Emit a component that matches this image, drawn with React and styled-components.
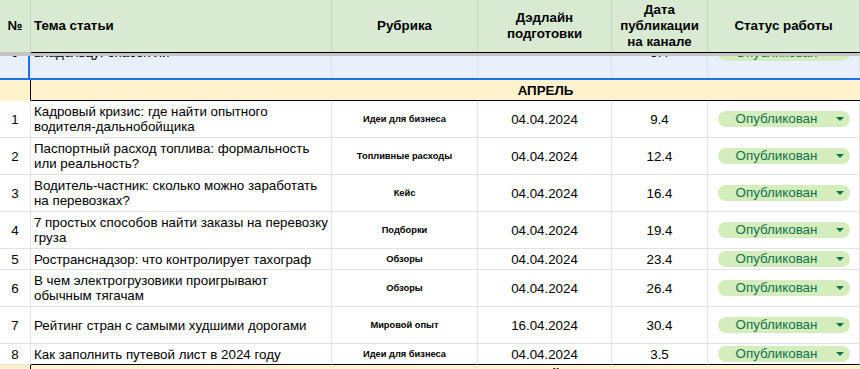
import React from "react";
import styled, { createGlobalStyle } from "styled-components";

const COLS = "31px 301px 146px 134px 96px 152px 200px";
const GRID = "#e2e2e2";
const TEXT = "13.33px";

const GlobalStyle = createGlobalStyle`
  html, body { margin: 0; padding: 0; background: #fff; }
  body {
    font-family: "Liberation Sans", Arial, sans-serif;
    color: #000;
    overflow: hidden;
  }
`;

const Sheet = styled.div`
  width: 860px;
  height: 369px;
  overflow: hidden;
`;

const Table = styled.div`
  width: 1060px;
`;

const Row = styled.div`
  display: grid;
  grid-template-columns: ${COLS};
  height: ${(p) => p.$h || 37}px;
`;

const HeadCell = styled.div`
  box-sizing: border-box;
  display: flex;
  align-items: center;
  justify-content: ${(p) => (p.$left ? "flex-start" : "center")};
  text-align: ${(p) => (p.$left ? "left" : "center")};
  padding: 0 3px;
  background: #d9ead3;
  border-right: 1px solid #c6d6c0;
  font-weight: bold;
  font-size: ${TEXT};
  line-height: 16px;
`;

const FreezeBar = styled.div`
  box-sizing: border-box;
  grid-column: ${(p) => (p.$edge ? "2 / -1" : "auto")};
  background: #c4c4c4;
  border-top: 1px solid ${(p) => (p.$edge ? "#000" : "#c4c4c4")};
`;

const ScrolledRow = styled(Row)`
  box-sizing: border-box;
  overflow: hidden;
  background: #e8f0fe;
  border-bottom: 2px solid #1a73e8;
`;

const Cell = styled.div`
  box-sizing: border-box;
  display: flex;
  align-items: center;
  justify-content: ${(p) => (p.$left ? "flex-start" : "center")};
  text-align: ${(p) => (p.$left ? "left" : "center")};
  padding: 0 3px;
  border-right: 1px solid ${(p) => p.$right || GRID};
  border-bottom: 1px solid ${(p) => p.$bottom || GRID};
  background: ${(p) => p.$bg || "transparent"};
  font-size: ${TEXT};
  line-height: 15px;
  overflow: hidden;
  white-space: nowrap;
`;

const ClippedCell = styled(Cell)`
  height: 53px;
  margin-top: -30px;
  border-bottom: none;
  box-shadow: ${(p) => (p.$mark ? "inset -2px 0 0 #1a73e8" : "none")};
`;

const Topic = styled.span`
  display: flex;
  flex-direction: column;
`;

const Rubric = styled.span`
  font-weight: bold;
  font-size: 9.3px;
  line-height: 11px;
`;

const MonthCell = styled.div`
  box-sizing: border-box;
  grid-column: 2 / -1;
  display: flex;
  align-items: center;
  justify-content: center;
  background: #fff2cc;
  border-bottom: 1px solid ${(p) => (p.$open ? "#fff2cc" : "#000")};
  font-weight: bold;
  font-size: ${TEXT};
`;

const StatusChip = styled.div`
  width: 132px;
  height: 16px;
  border-radius: 8px;
  background: #d4edbc;
  color: #11734b;
  display: flex;
  align-items: center;
  font-size: ${TEXT};
  line-height: 16px;
`;

const ChipLabel = styled.span`
  flex: 1;
  text-align: center;
`;

const ChipArrow = styled.svg`
  width: 8px;
  height: 4px;
  margin-right: 6px;
  flex: none;
`;

const Status = () => (
  <StatusChip>
    <ChipLabel>Опубликован</ChipLabel>
    <ChipArrow viewBox="0 0 8 4">
      <path d="M0 0 L8 0 L4 4 Z" fill="#11734b" />
    </ChipArrow>
  </StatusChip>
);

const articles = [
  { n: 1, title: ["Кадровый кризис: где найти опытного", "водителя-дальнобойщика"], rubric: "Идеи для бизнеса", deadline: "04.04.2024", pub: "9.4", h: 37 },
  { n: 2, title: ["Паспортный расход топлива: формальность", "или реальность?"], rubric: "Топливные расходы", deadline: "04.04.2024", pub: "12.4", h: 37 },
  { n: 3, title: ["Водитель-частник: сколько можно заработать", "на перевозках?"], rubric: "Кейс", deadline: "04.04.2024", pub: "16.4", h: 37 },
  { n: 4, title: ["7 простых способов найти заказы на перевозку", "груза"], rubric: "Подборки", deadline: "04.04.2024", pub: "19.4", h: 37 },
  { n: 5, title: ["Ространснадзор: что контролирует тахограф"], rubric: "Обзоры", deadline: "04.04.2024", pub: "23.4", h: 21 },
  { n: 6, title: ["В чем электрогрузовики проигрывают", "обычным тягачам"], rubric: "Обзоры", deadline: "04.04.2024", pub: "26.4", h: 37 },
  { n: 7, title: ["Рейтинг стран с самыми худшими дорогами"], rubric: "Мировой опыт", deadline: "16.04.2024", pub: "30.4", h: 37 },
  { n: 8, title: ["Как заполнить путевой лист в 2024 году"], rubric: "Идеи для бизнеса", deadline: "04.04.2024", pub: "3.5", h: 21 },
];

export default function App() {
  return (
    <Sheet>
      <GlobalStyle />
      <Table>
        <Row $h={52}>
          <HeadCell>№</HeadCell>
          <HeadCell $left>Тема статьи</HeadCell>
          <HeadCell>Рубрика</HeadCell>
          <HeadCell>Дэдлайн<br />подготовки</HeadCell>
          <HeadCell>Дата<br />публикации<br />на канале</HeadCell>
          <HeadCell>Статус работы</HeadCell>
          <HeadCell />
        </Row>
        <Row $h={4}>
          <FreezeBar />
          <FreezeBar $edge />
        </Row>

        <ScrolledRow $h={24}>
          <ClippedCell $mark>9</ClippedCell>
          <ClippedCell $left>владельцу: опасен ли</ClippedCell>
          <ClippedCell />
          <ClippedCell />
          <ClippedCell>5.4</ClippedCell>
          <ClippedCell><Status /></ClippedCell>
          <ClippedCell />
        </ScrolledRow>

        <Row $h={21}>
          <Cell $bg="#fff2cc" $right="#000" $bottom="#fff2cc" />
          <MonthCell>АПРЕЛЬ</MonthCell>
        </Row>

        {articles.map((a, i) => {
          const edge = i === articles.length - 1 ? "#000" : GRID;
          return (
            <Row key={a.n} $h={a.h}>
              <Cell>{a.n}</Cell>
              <Cell $left $bottom={edge}>
                <Topic>
                  {a.title.map((line) => (
                    <span key={line}>{line}</span>
                  ))}
                </Topic>
              </Cell>
              <Cell $bottom={edge}><Rubric>{a.rubric}</Rubric></Cell>
              <Cell $bottom={edge}>{a.deadline}</Cell>
              <Cell $bottom={edge}>{a.pub}</Cell>
              <Cell $bottom={edge}><Status /></Cell>
              <Cell $bottom={edge} />
            </Row>
          );
        })}

        <Row $h={21}>
          <Cell $bg="#fff2cc" $right="#000" $bottom="#fff2cc" />
          <MonthCell $open>МАЙ</MonthCell>
        </Row>
      </Table>
    </Sheet>
  );
}
